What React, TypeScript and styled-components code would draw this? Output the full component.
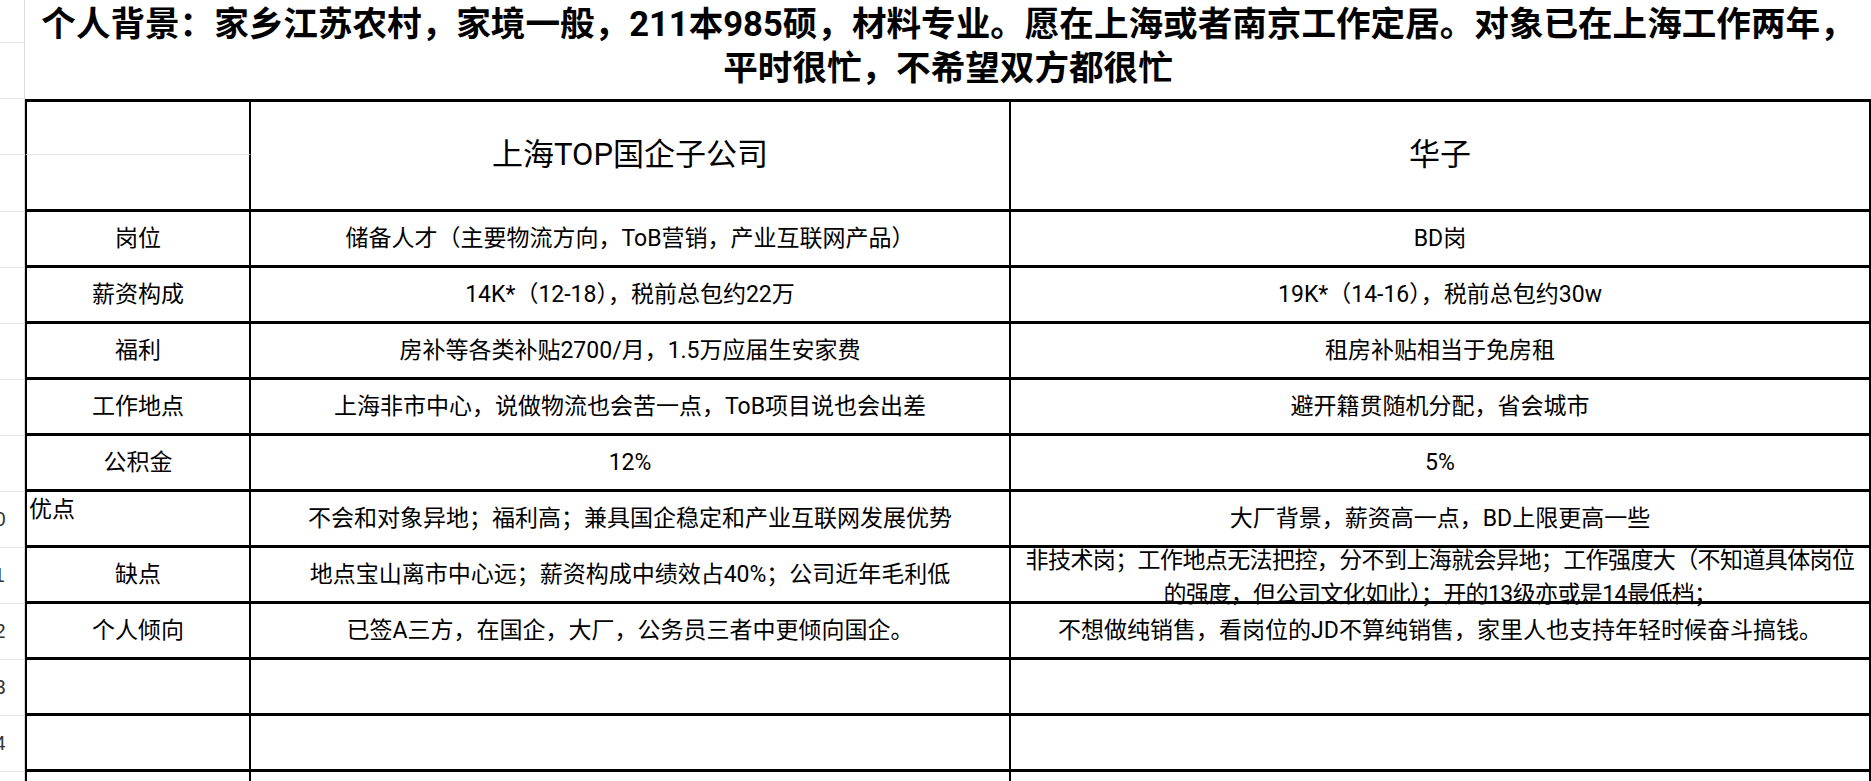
import React from "react"
import styled, { createGlobalStyle } from "styled-components"

const GlobalStyle = createGlobalStyle`
  html, body {
    margin: 0;
    padding: 0;
    background: #fff;
    overflow: hidden;
  }
  * {
    box-sizing: border-box;
  }
`

const Sheet = styled.div`
  display: grid;
  grid-template-columns: 25px 226px 760px 860px;
  grid-template-rows: 43px 56px 56px 57px repeat(11, 56px);
  width: 1871px;
  height: 781px;
  overflow: hidden;
  font-family: Roboto, "Noto Sans CJK SC", sans-serif;
  color: #000;
`

// only the right edge of the row header strip is in view
const RowNumber = styled.div`
  display: flex;
  justify-content: flex-end;
  align-items: center;
  overflow: hidden;
  border-right: 1px solid #d9d9d9;
  border-bottom: 1px solid #e6e6e6;
  font-family: "Liberation Sans", sans-serif;
  font-size: 20px;
  color: #333;

  span {
    flex-shrink: 0;
    width: 59px;
    text-align: center;
  }
`

const Title = styled.div`
  grid-column: 2 / span 3;
  grid-row: span 2;
  padding-top: 2px;
  text-align: center;
  font-size: 34.6px;
  font-weight: 700;
  line-height: 44px;
  white-space: nowrap;
`

const Cell = styled.div<{ $first?: boolean; $top?: boolean; $head?: boolean; $corner?: boolean; $topLeft?: boolean; $tight?: boolean }>`
  display: flex;
  justify-content: ${p => (p.$topLeft ? "flex-start" : "center")};
  align-items: ${p => (p.$topLeft ? "flex-start" : "center")};
  grid-row: ${p => (p.$head ? "span 2" : "auto")};
  padding: ${p => (p.$topLeft ? "1px 2px" : p.$tight ? "6px 2px 0" : "0 2px")};
  border-left: ${p => (p.$first ? "2px solid #000" : "none")};
  border-right: 2px solid #000;
  border-top: ${p => (p.$top ? "3px solid #000" : "none")};
  border-bottom: ${p => (p.$corner ? "1px solid #e4e4e4" : "3px solid #000")};
  text-align: center;
  white-space: pre-line;
  font-size: ${p => (p.$head ? "31px" : "23px")};
  letter-spacing: ${p => (p.$tight ? "-0.6px" : "0")};
  line-height: 1.45;
`

const rows: string[][] = [
  ["岗位", "储备人才（主要物流方向，ToB营销，产业互联网产品）", "BD岗"],
  ["薪资构成", "14K*（12-18），税前总包约22万", "19K*（14-16），税前总包约30w"],
  ["福利", "房补等各类补贴2700/月，1.5万应届生安家费", "租房补贴相当于免房租"],
  ["工作地点", "上海非市中心，说做物流也会苦一点，ToB项目说也会出差", "避开籍贯随机分配，省会城市"],
  ["公积金", "12%", "5%"],
  ["优点", "不会和对象异地；福利高；兼具国企稳定和产业互联网发展优势", "大厂背景，薪资高一点，BD上限更高一些"],
  [
    "缺点",
    "地点宝山离市中心远；薪资构成中绩效占40%；公司近年毛利低",
    "非技术岗；工作地点无法把控，分不到上海就会异地；工作强度大（不知道具体岗位\n的强度，但公司文化如此）；开的13级亦或是14最低档；",
  ],
  ["个人倾向", "已签A三方，在国企，大厂，公务员三者中更倾向国企。", "不想做纯销售，看岗位的JD不算纯销售，家里人也支持年轻时候奋斗搞钱。"],
  ["", "", ""],
  ["", "", ""],
  ["", "", ""],
]

export default function App() {
  return (
    <>
      <GlobalStyle />
      <Sheet>
        <RowNumber><span>1</span></RowNumber>
        <Title>
          个人背景：家乡江苏农村，家境一般，211本985硕，材料专业。愿在上海或者南京工作定居。对象已在上海工作两年，
          <br />
          平时很忙，不希望双方都很忙
        </Title>
        <RowNumber><span>2</span></RowNumber>

        <RowNumber><span>3</span></RowNumber>
        <Cell $first $top $corner />
        <Cell $top $head>上海TOP国企子公司</Cell>
        <Cell $top $head>华子</Cell>
        <RowNumber><span>4</span></RowNumber>
        <Cell $first />

        {rows.map(([label, a, b], i) => (
          <React.Fragment key={i}>
            <RowNumber><span>{i + 5}</span></RowNumber>
            <Cell $first $topLeft={label === "优点"}>{label}</Cell>
            <Cell>{a}</Cell>
            <Cell $tight={label === "缺点"}>{b}</Cell>
          </React.Fragment>
        ))}
      </Sheet>
    </>
  )
}
